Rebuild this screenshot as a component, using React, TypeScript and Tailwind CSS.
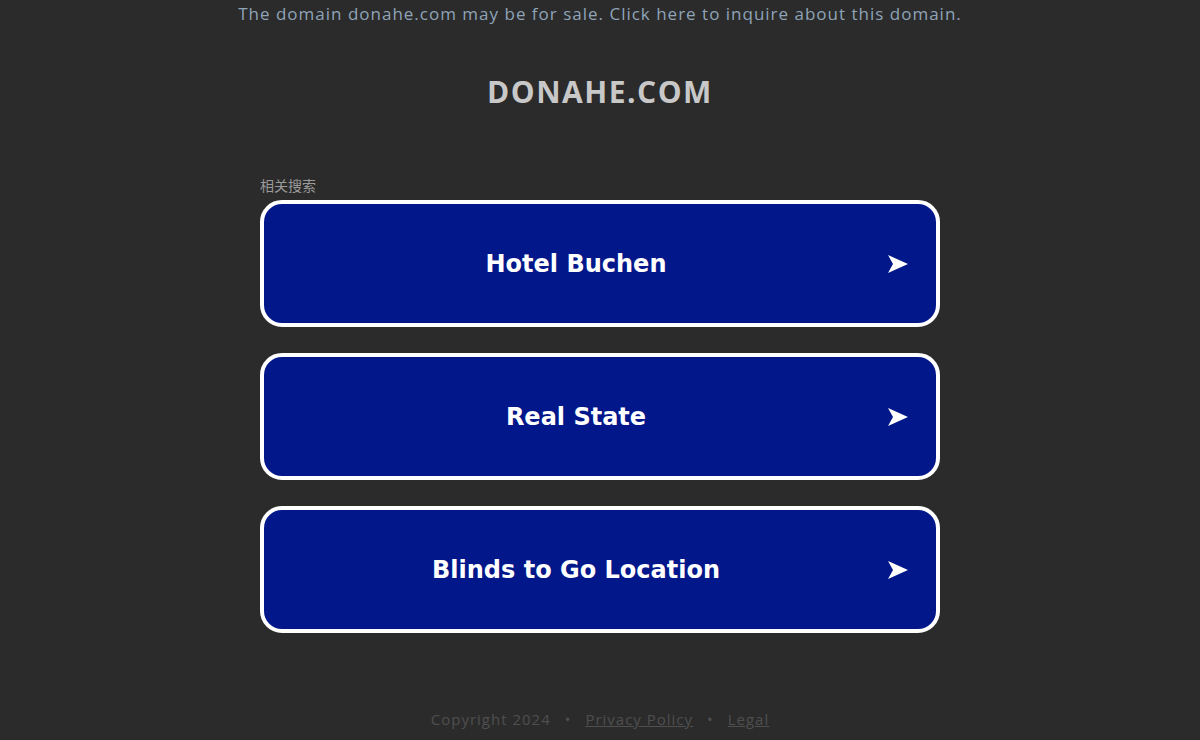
const links = ["Hotel Buchen", "Real State", "Blinds to Go Location"];

function Arrow() {
  return (
    <svg viewBox="0 0 20 18" className="h-[18px] w-[20px]" fill="#ffffff">
      <path d="M0 0 L20 9 L0 18 L5 9 Z" />
    </svg>
  );
}

export default function App() {
  return (
    <div className="flex h-[740px] w-full flex-col items-center bg-[#2b2b2b] font-['Open_Sans',sans-serif]">
      <p className="mt-[2px] text-[17px] leading-[24px] tracking-[1px] text-[#8fa4b8]">
        The domain donahe.com may be for sale. Click here to inquire about this domain.
      </p>
      <h1 className="mt-[50px] text-[30px] font-bold leading-[32px] tracking-[1.5px] text-[#c8c8c8]">DONAHE.COM</h1>
      <div className="mt-[68px] flex w-[680px] flex-col">
        <span className="font-['Noto_Sans_CJK_SC',sans-serif] text-[14px] leading-[18px] text-[#9a9a9a]">相关搜索</span>
        <div className="mt-[6px] flex flex-col gap-[26px]">
          {links.map((l) => (
            <a
              key={l}
              href="#"
              className="flex h-[127px] items-center rounded-[22px] border-4 border-white bg-[#02178a] pr-[28px]"
            >
              <span className="flex-1 text-center font-['DejaVu_Sans',sans-serif] text-[24px] font-bold text-white">
                {l}
              </span>
              <Arrow />
            </a>
          ))}
        </div>
      </div>
      <div className="mt-auto mb-[10px] flex items-center gap-[14px] text-[15px] tracking-[1px] text-[#4f4f4f]">
        <span>Copyright 2024</span>
        <span>•</span>
        <a href="#" className="underline">Privacy Policy</a>
        <span>•</span>
        <a href="#" className="underline">Legal</a>
      </div>
    </div>
  );
}
